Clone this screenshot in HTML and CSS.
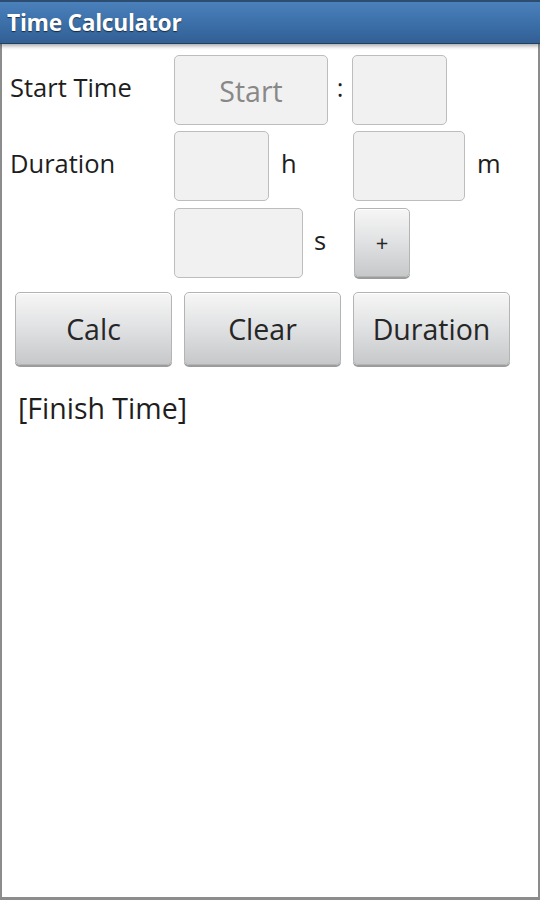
FILE: index.html
```html
<!DOCTYPE html>
<html>
<head>
<meta charset="utf-8">
<link rel="stylesheet" href="styles.css">
</head>
<body>
<div class="app">
  <div class="titlebar"><span class="title">Time Calculator</span></div>
  <div class="content">
    <div class="row row1">
      <div class="label">Start Time</div>
      <div class="field f-start"><span class="hint">Start</span></div>
      <div class="unit colon">:</div>
      <div class="field f-min"></div>
    </div>
    <div class="row row2">
      <div class="label">Duration</div>
      <div class="field f-h"></div>
      <div class="unit u-h">h</div>
      <div class="field f-m"></div>
      <div class="unit u-m">m</div>
    </div>
    <div class="row row3">
      <div class="label"></div>
      <div class="field f-s"></div>
      <div class="unit u-s">s</div>
      <div class="btn plus">+</div>
    </div>
    <div class="buttons">
      <div class="btn big">Calc</div>
      <div class="btn big">Clear</div>
      <div class="btn big">Duration</div>
    </div>
    <div class="result">[Finish Time]</div>
  </div>
</div>
</body>
</html>
```
FILE: styles.css
```css
html, body {
  margin: 0;
  padding: 0;
  background: #ffffff;
}
.app {
  width: 540px;
  height: 900px;
  box-sizing: border-box;
  border-left: 2px solid #8c8c8c;
  border-right: 2px solid #8c8c8c;
  border-bottom: 3px solid #8c8c8c;
  display: flex;
  flex-direction: column;
  font-family: "Open Sans", "Noto Sans", sans-serif;
  color: #1e1e1e;
  background: #fff;
}
.titlebar {
  height: 44px;
  margin: 0 -2px;
  box-sizing: border-box;
  border-top: 2px solid #2c4c70;
  border-bottom: 1px solid #21405f;
  background: linear-gradient(#4a80bb, #3a6da6 60%, #325f94);
  box-shadow: 0 2px 4px rgba(0,0,0,0.35);
  display: flex;
  align-items: center;
  padding-left: 7px;
  position: relative;
}
.title {
  color: #fff;
  font-weight: bold;
  font-size: 22.8px;
  letter-spacing: -0.3px;
  text-shadow: 0 1px 1px rgba(0,0,0,0.6);
  margin-top: -1px;
}
.content {
  padding: 10px 0 0 8px;
  display: flex;
  flex-direction: column;
}
.row {
  display: flex;
  align-items: center;
  height: 71px;
}
.row2 { margin-top: 5px; }
.row3 { margin-top: 6px; height: 72px; }
.label {
  width: 164px;
  flex: none;
  font-size: 25.5px;
  color: #1e1e1e;
  margin-top: -6px;
}
.field {
  box-sizing: border-box;
  height: 70px;
  background: #f1f1f1;
  border: 1px solid #bdbdbd;
  border-radius: 5px;
  flex: none;
  display: flex;
  align-items: center;
  justify-content: center;
}
.hint {
  font-size: 28.5px;
  color: #888888;
  margin-top: 2px;
}
.f-start { width: 154px; }
.f-min { width: 95px; }
.f-h { width: 95px; }
.f-m { width: 112px; }
.f-s { width: 129px; }
.unit {
  font-size: 25.5px;
  color: #1e1e1e;
  margin-top: -6px;
}
.colon { width: 24px; text-align: center; }
.u-h { width: 84px; padding-left: 12px; box-sizing: border-box; }
.u-m { padding-left: 12px; }
.u-s { width: 51px; padding-left: 11px; box-sizing: border-box; }
.btn {
  box-sizing: border-box;
  background: linear-gradient(#f6f6f6, #e2e3e4 45%, #c6c8ca);
  border: 1px solid #b4b4b4;
  border-radius: 5px;
  box-shadow: 0 2px 0 #9c9c9c, inset 0 1px 0 #ffffff;
  display: flex;
  align-items: center;
  justify-content: center;
  color: #262626;
  flex: none;
}
.plus {
  width: 56px;
  height: 69px;
  font-size: 22px;
  margin-top: -2px;
}
.buttons {
  display: flex;
  gap: 12px;
  margin-top: 13px;
  padding-left: 5px;
}
.big {
  width: 157px;
  height: 73px;
  font-size: 28.5px;
}
.result {
  margin-top: 24px;
  padding-left: 8px;
  font-size: 28.5px;
  color: #1e1e1e;
}
```
